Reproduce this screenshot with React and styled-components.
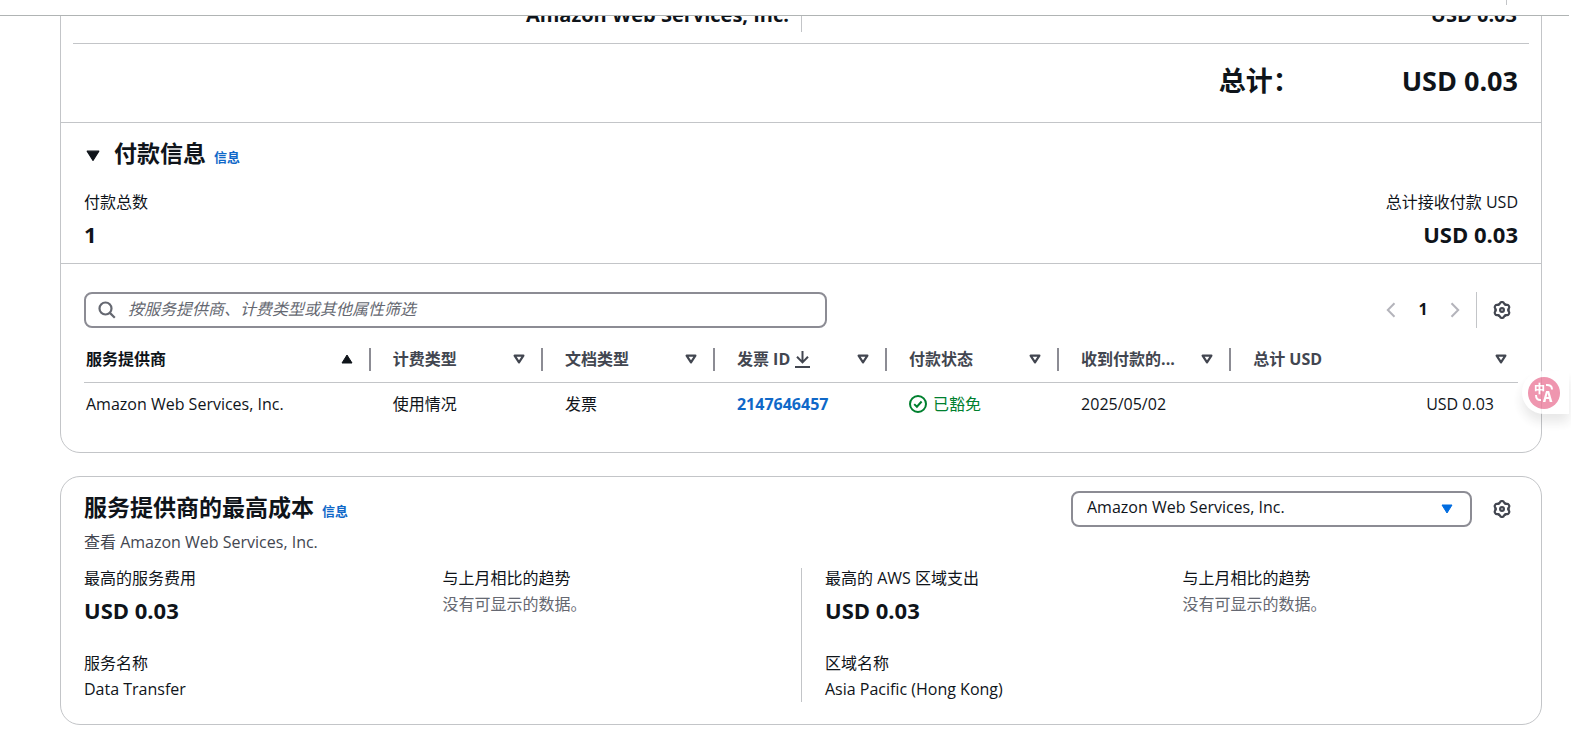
import React, { useState } from 'react';
import styled, { createGlobalStyle, ThemeProvider } from 'styled-components';

const theme = {
  color: {
    text: '#0f141a',
    secondary: '#424650',
    muted: '#656871',
    link: '#0f68c8',
    caret: '#006ce0',
    success: '#00802f',
    border: '#c3c5c8',
    control: '#8c8c94',
    disabled: '#b4b4bb',
  },
  size: {
    small: '13px',
    body: '16px',
    row: '20px',
    value: '22px',
    heading: '23px',
    total: '27px',
  },
};

const GlobalStyle = createGlobalStyle`
  * {
    box-sizing: border-box;
  }

  body {
    margin: 0;
    background: #fff;
    color: ${theme.color.text};
    font-family: "Open Sans", "Noto Sans CJK SC", sans-serif;
    font-size: ${theme.size.body};
    line-height: 20px;
  }

  button, input, select {
    font: inherit;
    color: inherit;
  }

  h2, p, dl, dd {
    margin: 0;
  }
`;

const Page = styled.div`
  display: flex;
  flex-direction: column;
  height: 100vh;
  margin-right: 2px;
`;

const TopBar = styled.header`
  flex: none;
  display: flex;
  justify-content: flex-end;
  align-items: flex-start;
  height: 16px;
  padding-right: 62px;
  border-bottom: 1px solid #b0b4b4;
`;

const TopBarDivider = styled.span`
  width: 1px;
  height: 5px;
  background: ${({ theme }) => theme.color.border};
`;

const Content = styled.main`
  flex: 1;
  min-height: 0;
  overflow: hidden;
  padding: 0 27px 0 60px;
`;

const Card = styled.section`
  border: 1px solid ${({ theme }) => theme.color.border};
  border-radius: 20px;
  margin-bottom: 23px;
`;

/* The page is scrolled, so the first card starts above the visible area. */
const ScrolledCard = styled(Card)`
  margin-top: -33px;
`;

const SummaryRow = styled.div`
  display: grid;
  grid-template-columns: 1fr 1fr;
  margin: 0 12px;
  padding: 10px 0 11px;
  border-bottom: 1px solid ${({ theme }) => theme.color.border};
  font-size: ${({ theme }) => theme.size.row};
  font-weight: 700;
  line-height: 28px;
  text-align: right;
`;

const SummaryCell = styled.div`
  padding: 7px 12px 3px;

  & + & {
    border-left: 1px solid ${({ theme }) => theme.color.border};
  }
`;

const TotalRow = styled.div`
  display: flex;
  justify-content: flex-end;
  align-items: center;
  gap: 102px;
  height: 78px;
  padding: 0 23px 4px;
  font-size: ${({ theme }) => theme.size.total};
  font-weight: 700;
`;

const PaymentSection = styled.div`
  padding: 16px 23px 15px;
  border-top: 1px solid ${({ theme }) => theme.color.border};
  border-bottom: 1px solid ${({ theme }) => theme.color.border};
`;

const HeadingRow = styled.div`
  display: flex;
  align-items: baseline;
  gap: 8px;
  height: 28px;
`;

const Heading = styled.h2`
  font-size: ${({ theme }) => theme.size.heading};
  font-weight: 700;
  line-height: 28px;
`;

const InfoLink = styled.a`
  color: ${({ theme }) => theme.color.link};
  font-size: ${({ theme }) => theme.size.small};
  font-weight: 700;
  text-decoration: none;
`;

const ExpandButton = styled.button`
  display: flex;
  align-items: baseline;
  gap: 14px;
  padding: 0 0 0 2px;
  border: 0;
  background: none;
  font-size: ${({ theme }) => theme.size.heading};
  font-weight: 700;
  line-height: 28px;
`;

const PaymentTotals = styled.div`
  display: flex;
  justify-content: space-between;
  margin-top: 25px;
`;

const Metric = styled.dl`
  display: flex;
  flex-direction: column;
  gap: ${({ $large }) => ($large ? '8px' : '6px')};
  text-align: ${({ $align }) => $align || 'left'};
`;

const MetricLabel = styled.dt`
  height: 20px;
`;

const MetricValue = styled.dd`
  height: ${({ $large }) => ($large ? '28px' : '20px')};
  color: ${({ $muted, theme }) => ($muted ? theme.color.muted : theme.color.text)};
  font-size: ${({ $large, theme }) => ($large ? theme.size.value : theme.size.body)};
  font-weight: ${({ $large }) => ($large ? 700 : 400)};
  line-height: ${({ $large }) => ($large ? '28px' : '20px')};
`;

const TableSection = styled.div`
  padding: 28px 23px 26px;
`;

const Toolbar = styled.div`
  display: flex;
  justify-content: space-between;
  align-items: center;
`;

const SearchBox = styled.label`
  display: flex;
  align-items: center;
  gap: 12px;
  width: 51.8%;
  height: 36px;
  padding: 0 12px;
  border: 2px solid ${({ theme }) => theme.color.control};
  border-radius: 8px;
  color: ${({ theme }) => theme.color.muted};
`;

const SearchInput = styled.input`
  flex: 1;
  min-width: 0;
  padding: 0 0 2px;
  border: 0;
  outline: none;
  background: none;

  &::placeholder {
    color: ${({ theme }) => theme.color.muted};
    font-style: italic;
    opacity: 1;
  }
`;

const Pager = styled.nav`
  display: flex;
  align-items: center;
`;

const IconButton = styled.button`
  display: flex;
  justify-content: center;
  align-items: center;
  width: 32px;
  height: 36px;
  padding: 0;
  border: 0;
  background: none;
  color: ${({ theme }) => theme.color.secondary};
  font-weight: 700;

  &:disabled {
    color: ${({ theme }) => theme.color.disabled};
  }

  &[aria-current] {
    padding-bottom: 2px;
    color: ${({ theme }) => theme.color.text};
  }
`;

const SettingsSlot = styled.div`
  display: flex;
  margin-left: 5px;
  padding-left: 9px;
  border-left: 1px solid ${({ theme }) => theme.color.border};
`;

const Table = styled.table`
  width: 100%;
  border-collapse: separate;
  border-spacing: 0;
  table-layout: fixed;
  text-align: left;
`;

const HeaderCell = styled.th`
  width: ${({ $width }) => $width};
  padding: 20px 0 11px;
  border-bottom: 1px solid ${({ theme }) => theme.color.border};
`;

const SortButton = styled.button`
  display: flex;
  justify-content: space-between;
  align-items: center;
  width: 100%;
  height: 23px;
  padding: 0 ${({ $last }) => ($last ? '11px' : '16px')} 2px ${({ $first }) => ($first ? '2px' : '22px')};
  border: 0;
  border-right: ${({ $last, theme }) => ($last ? 0 : `2px solid ${theme.color.control}`)};
  background: none;
  color: ${({ $first, theme }) => ($first ? theme.color.text : theme.color.secondary)};
  font-weight: 700;
`;

const HeaderText = styled.span`
  display: flex;
  align-items: center;
  gap: 4px;
`;

const BodyCell = styled.td`
  height: 43px;
  padding: 0 24px 1px 22px;
  text-align: ${({ $align }) => $align || 'left'};

  &:first-child {
    padding-left: 2px;
  }
`;

const InvoiceLink = styled.a`
  color: ${({ theme }) => theme.color.link};
  font-weight: 700;
  text-decoration: none;
`;

const Status = styled.span`
  display: flex;
  align-items: center;
  gap: 6px;
  color: ${({ theme }) => theme.color.success};
`;

const CostCard = styled(Card)`
  padding: 14px 23px 22px;
`;

const CostHeader = styled.div`
  display: flex;
  justify-content: space-between;
  align-items: flex-start;
`;

const Description = styled.p`
  height: 20px;
  margin-top: 11px;
  color: ${({ theme }) => theme.color.secondary};
`;

const CostTitle = styled.div`
  padding-top: 2px;
`;

const CostActions = styled.div`
  display: flex;
  align-items: center;
  gap: 14px;
`;

const SelectBox = styled.div`
  position: relative;
  width: 401px;

  svg {
    position: absolute;
    top: 13px;
    right: 19px;
    color: ${({ theme }) => theme.color.caret};
    pointer-events: none;
  }
`;

const ProviderSelect = styled.select`
  appearance: none;
  display: block;
  width: 100%;
  height: 36px;
  padding: 0 40px 4px 14px;
  border: 2px solid ${({ theme }) => theme.color.control};
  border-radius: 8px;
  background: #fff;
`;

const CostColumns = styled.div`
  display: grid;
  grid-template-columns: 1fr 1fr;
  margin-top: 16px;
`;

const CostColumn = styled.div`
  display: grid;
  grid-template-columns: 1fr 1fr;
  align-content: start;
  row-gap: 29px;
  padding-bottom: 3px;

  & + & {
    grid-template-columns: calc(50% + 11px) 1fr;
    padding-left: 23px;
    border-left: 1px solid ${({ theme }) => theme.color.border};
  }
`;

const TranslateButton = styled.button`
  position: fixed;
  top: 371px;
  right: 2px;
  display: flex;
  align-items: center;
  height: 43px;
  padding: 0 9px 0 6px;
  border: 0;
  border-radius: 22px 0 0 22px;
  background: #fff;
  box-shadow: 0 8px 12px rgba(0, 0, 0, 0.12);
  opacity: 0.8;
`;

const SearchIcon = () => (
  <svg width="18" height="18" viewBox="0 0 18 18" fill="none" stroke="currentColor" strokeWidth="2.2" aria-hidden="true">
    <circle cx="7.5" cy="7.5" r="6" />
    <path d="M11.6 11.6 16.8 16.8" />
  </svg>
);

const ChevronIcon = ({ direction }) => (
  <svg width="10" height="16" viewBox="0 0 10 16" fill="none" stroke="currentColor" strokeWidth="2" aria-hidden="true">
    <path d={direction === 'left' ? 'M8.5 1.2 1.8 8l6.7 6.8' : 'M1.5 1.2 8.2 8l-6.7 6.8'} />
  </svg>
);

const SettingsIcon = () => (
  <svg width="18" height="18" viewBox="0 0 18 18" fill="none" stroke="currentColor" strokeWidth="2.2" strokeLinecap="round" strokeLinejoin="round" aria-hidden="true">
    {[0, 60, 120, 180, 240, 300].map(angle => (
      <path
        key={angle}
        d="M5.4 3.6Q6.4 3.5 6.8 2.6Q7.4 1.1 8.4 1.1H9.6Q10.6 1.1 11.2 2.6Q11.6 3.5 12.6 3.6"
        transform={`rotate(${angle} 9 9)`}
      />
    ))}
    <circle cx="9" cy="9" r="1.9" />
  </svg>
);

const SortIcon = ({ active }) => (
  <svg width="12" height="10" viewBox="0 0 12 10" aria-hidden="true">
    {active ? (
      <path d="M6 1 11 9H1Z" fill="currentColor" stroke="currentColor" strokeLinejoin="round" />
    ) : (
      <path d="M1.6 1.6h8.8L6 8.4Z" fill="none" stroke="currentColor" strokeWidth="2.2" strokeLinejoin="round" />
    )}
  </svg>
);

const CaretIcon = ({ size = 12 }) => (
  <svg width={size} height={size * 10 / 12} viewBox="0 0 12 10" aria-hidden="true">
    <path d="M1 1h10L6 9Z" fill="currentColor" stroke="currentColor" strokeLinejoin="round" />
  </svg>
);

const DownloadIcon = () => (
  <svg width="17" height="18" viewBox="0 0 17 18" fill="none" stroke="currentColor" strokeWidth="2" aria-hidden="true">
    <path d="M8.5 1v11M3 6.8l5.5 5.6L14 6.8M1 17h15" />
  </svg>
);

const SuccessIcon = () => (
  <svg width="18" height="18" viewBox="0 0 18 18" fill="none" stroke="currentColor" strokeWidth="2" aria-hidden="true">
    <circle cx="9" cy="9" r="8" />
    <path d="m5.2 9.1 2.7 2.6 4.7-5.2" />
  </svg>
);

const TranslateIcon = () => (
  <svg width="32" height="32" viewBox="0 0 32 32" aria-hidden="true">
    <circle cx="16" cy="16" r="16" fill="#eb7c9c" />
    <g fill="#fff" fontFamily="Noto Sans CJK SC, sans-serif" fontWeight="900">
      <text x="6" y="16" fontSize="11">中</text>
      <text x="15" y="25" fontSize="14">A</text>
    </g>
    <path d="M18 8q6-.5 6 4.5M8 18q0 5.5 5 5" fill="none" stroke="#fff" strokeWidth="2" />
  </svg>
);

const columns = [
  { label: '服务提供商', width: '20%' },
  { label: '计费类型', width: '12%' },
  { label: '文档类型', width: '12%' },
  { label: '发票 ID', width: '12%', download: true },
  { label: '付款状态', width: '12%' },
  { label: '收到付款的...', width: '12%' },
  { label: '总计 USD', width: '20%' },
];

const costs = [
  {
    title: '最高的服务费用', amount: 'USD 0.03', nameLabel: '服务名称', name: 'Data Transfer',
  },
  {
    title: '最高的 AWS 区域支出', amount: 'USD 0.03', nameLabel: '区域名称', name: 'Asia Pacific (Hong Kong)',
  },
];

const Payments = () => {
  const [filter, setFilter] = useState('');

  return (
    <TableSection>
      <Toolbar>
        <SearchBox htmlFor="payment-filter">
          <SearchIcon />
          <SearchInput
            id="payment-filter"
            type="text"
            aria-label="按服务提供商、计费类型或其他属性筛选"
            placeholder="按服务提供商、计费类型或其他属性筛选"
            value={filter}
            onChange={e => setFilter(e.target.value)}
          />
        </SearchBox>
        <Pager>
          <IconButton type="button" aria-label="上一页" disabled><ChevronIcon direction="left" /></IconButton>
          <IconButton type="button" aria-current="page">1</IconButton>
          <IconButton type="button" aria-label="下一页" disabled><ChevronIcon direction="right" /></IconButton>
          <SettingsSlot>
            <IconButton type="button" aria-label="首选项"><SettingsIcon /></IconButton>
          </SettingsSlot>
        </Pager>
      </Toolbar>
      <Table>
        <thead>
          <tr>
            {columns.map(({ label, width, download }, index) => (
              <HeaderCell key={label} $width={width} scope="col">
                <SortButton type="button" $first={index === 0} $last={index === columns.length - 1}>
                  <HeaderText>
                    {label}
                    {download && <DownloadIcon />}
                  </HeaderText>
                  <SortIcon active={index === 0} />
                </SortButton>
              </HeaderCell>
            ))}
          </tr>
        </thead>
        <tbody>
          <tr>
            <BodyCell>Amazon Web Services, Inc.</BodyCell>
            <BodyCell>使用情况</BodyCell>
            <BodyCell>发票</BodyCell>
            <BodyCell><InvoiceLink href="#invoice">2147646457</InvoiceLink></BodyCell>
            <BodyCell>
              <Status>
                <SuccessIcon />
                已豁免
              </Status>
            </BodyCell>
            <BodyCell>2025/05/02</BodyCell>
            <BodyCell $align="right">USD 0.03</BodyCell>
          </tr>
        </tbody>
      </Table>
    </TableSection>
  );
};

const TopCosts = () => (
  <CostCard>
    <CostHeader>
      <CostTitle>
        <HeadingRow>
          <Heading>服务提供商的最高成本</Heading>
          <InfoLink href="#cost-info">信息</InfoLink>
        </HeadingRow>
        <Description>查看 Amazon Web Services, Inc.</Description>
      </CostTitle>
      <CostActions>
        <SelectBox>
          <ProviderSelect aria-label="服务提供商" defaultValue="aws">
            <option value="aws">Amazon Web Services, Inc.</option>
          </ProviderSelect>
          <CaretIcon />
        </SelectBox>
        <IconButton type="button" aria-label="首选项"><SettingsIcon /></IconButton>
      </CostActions>
    </CostHeader>
    <CostColumns>
      {costs.map(cost => (
        <CostColumn key={cost.title}>
          <Metric $large>
            <MetricLabel>{cost.title}</MetricLabel>
            <MetricValue $large>{cost.amount}</MetricValue>
          </Metric>
          <Metric>
            <MetricLabel>与上月相比的趋势</MetricLabel>
            <MetricValue $muted>没有可显示的数据。</MetricValue>
          </Metric>
          <Metric>
            <MetricLabel>{cost.nameLabel}</MetricLabel>
            <MetricValue>{cost.name}</MetricValue>
          </Metric>
        </CostColumn>
      ))}
    </CostColumns>
  </CostCard>
);

const App = () => (
  <ThemeProvider theme={theme}>
    <GlobalStyle />
    <Page>
      <TopBar><TopBarDivider /></TopBar>
      <Content>
        <ScrolledCard>
          <SummaryRow>
            <SummaryCell>Amazon Web Services, Inc.</SummaryCell>
            <SummaryCell>USD 0.03</SummaryCell>
          </SummaryRow>
          <TotalRow>
            <span>总计：</span>
            <span>USD 0.03</span>
          </TotalRow>
          <PaymentSection>
            <HeadingRow>
              <ExpandButton type="button" aria-expanded="true">
                <CaretIcon size={14} />
                付款信息
              </ExpandButton>
              <InfoLink href="#payment-info">信息</InfoLink>
            </HeadingRow>
            <PaymentTotals>
              <Metric $large>
                <MetricLabel>付款总数</MetricLabel>
                <MetricValue $large>1</MetricValue>
              </Metric>
              <Metric $large $align="right">
                <MetricLabel>总计接收付款 USD</MetricLabel>
                <MetricValue $large>USD 0.03</MetricValue>
              </Metric>
            </PaymentTotals>
          </PaymentSection>
          <Payments />
        </ScrolledCard>
        <TopCosts />
      </Content>
      <TranslateButton type="button" aria-label="翻译">
        <TranslateIcon />
      </TranslateButton>
    </Page>
  </ThemeProvider>
);

export default App;
